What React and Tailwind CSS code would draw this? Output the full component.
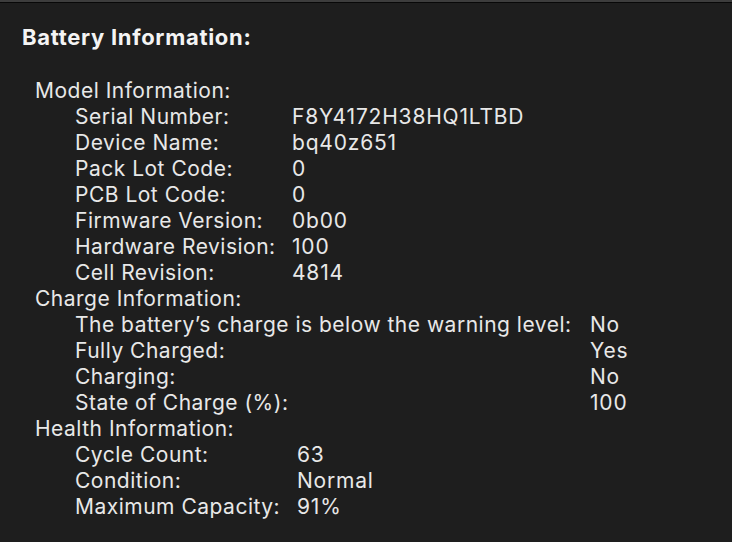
import React from 'react';

const model = [
  ['Serial Number:', 'F8Y4172H38HQ1LTBD'],
  ['Device Name:', 'bq40z651'],
  ['Pack Lot Code:', '0'],
  ['PCB Lot Code:', '0'],
  ['Firmware Version:', '0b00'],
  ['Hardware Revision:', '100'],
  ['Cell Revision:', '4814'],
];

const charge = [
  ['The battery\u2019s charge is below the warning level:', 'No'],
  ['Fully Charged:', 'Yes'],
  ['Charging:', 'No'],
  ['State of Charge (%):', '100'],
];

const health = [
  ['Cycle Count:', '63'],
  ['Condition:', 'Normal'],
  ['Maximum Capacity:', '91%'],
];

// one group: heading at 35px, rows indented to 75px, values in a fixed column
const Section = ({ title, rows, labelWidth }) => (
  <div>
    <div className="pl-[35px] h-[26px] leading-[26px]">{title}</div>
    {rows.map(([k, v]) => (
      <div key={k} className="flex pl-[75px] h-[26px] leading-[26px]">
        <span className={labelWidth}>{k}</span>
        <span className="tracking-[0.8px]">{v}</span>
      </div>
    ))}
  </div>
);

export default function App() {
  return (
    <div className="w-[732px] h-[542px] bg-[#1e1e1e] text-[#e8e8e8] text-[21px] tracking-[0.5px] font-['Inter','Liberation_Sans',sans-serif] overflow-hidden">
      <div className="h-[2px] bg-[#3d3d3d]" />
      <div className="h-[1px] bg-[#080808]" />

      <div className="pl-[22px] pt-[21px] h-[47px] leading-[26px] text-[22px] tracking-[0.7px] font-bold text-[#f4f4f4]">
        Battery Information:
      </div>

      <div className="pt-[28px]">
        <Section title="Model Information:" rows={model} labelWidth="w-[217px] shrink-0" />
        <Section title="Charge Information:" rows={charge} labelWidth="w-[515px] shrink-0" />
        <Section title="Health Information:" rows={health} labelWidth="w-[222px] shrink-0" />
      </div>
    </div>
  );
}
